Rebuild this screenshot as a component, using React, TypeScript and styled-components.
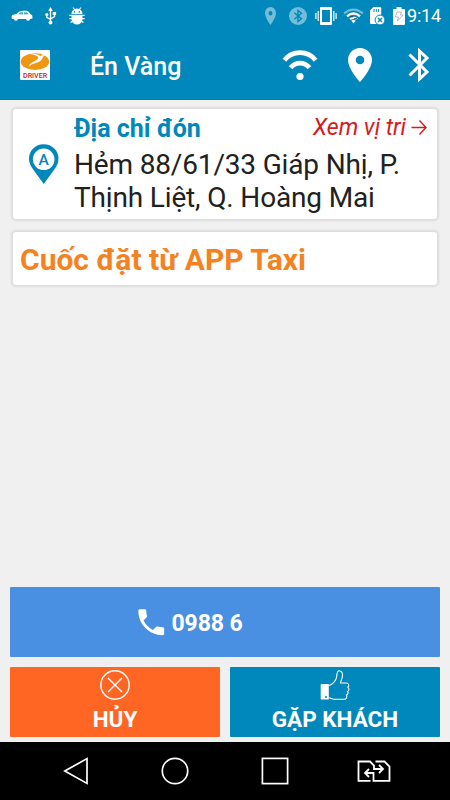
import React from "react";
import styled, { createGlobalStyle } from "styled-components";

const BLUE = "#0087bb";

const GlobalStyle = createGlobalStyle`
  * { box-sizing: border-box; }
  body { margin: 0; background: #f0f0f0; font-family: Roboto, sans-serif; }
  svg { display: block; flex: none; }
`;

const Screen = styled.div`
  width: 450px;
  height: 800px;
  display: flex;
  flex-direction: column;
  background: #f0f0f0;
  overflow: hidden;
`;

const StatusBar = styled.div`
  height: 32px;
  flex: none;
  display: flex;
  align-items: center;
  background: ${BLUE};
  color: #fff;
  padding: 0 0 1px 11px;
`;

const StatusIcon = styled.div<{ $gap: number; $dim?: boolean }>`
  margin-left: ${(p) => p.$gap}px;
  opacity: ${(p) => (p.$dim ? 0.45 : 1)};
`;

const Clock = styled.span`
  margin-left: 2px;
  font-size: 18px;
  line-height: 30px;
  letter-spacing: -0.2px;
  white-space: nowrap;
`;

const AppBar = styled.header`
  height: 68px;
  flex: none;
  display: flex;
  align-items: center;
  padding: 0 20px 2px;
  background: ${BLUE};
  border-bottom: 1px solid #0080b2;
  color: #fff;
`;

const Title = styled.h1`
  margin: 4px 0 0 40px;
  flex: 1;
  font-size: 25px;
  line-height: 30px;
  font-weight: 500;
`;

const AppActions = styled.div`
  display: flex;
  align-items: center;
`;

const Content = styled.main`
  flex: 1;
  display: flex;
  flex-direction: column;
  gap: 13px;
  padding: 9px 13px 0;
`;

const Card = styled.section<{ $height: number }>`
  height: ${(p) => p.$height}px;
  flex: none;
  display: flex;
  background: #fff;
  border-radius: 3px;
  box-shadow: 0 0 2px 2px #dcdcdc;
`;

const PinColumn = styled.div`
  width: 61px;
  padding: 35px 0 0 15px;
`;

const AddressColumn = styled.div`
  flex: 1;
  min-width: 0;
`;

const AddressHeader = styled.div`
  display: flex;
  justify-content: space-between;
  padding-right: 10px;
  height: 39px;
`;

const Heading = styled.h2`
  margin: 5px 0 0;
  color: ${BLUE};
  font-size: 25px;
  line-height: 30px;
  font-weight: 700;
  white-space: nowrap;
`;

const MapLink = styled.a`
  display: flex;
  align-items: center;
  gap: 5px;
  height: 30px;
  margin-top: 3px;
  color: #d71920;
  font-size: 23px;
  font-style: italic;
  white-space: nowrap;
`;

const Address = styled.p`
  margin: 0;
  color: #212121;
  font-size: 28px;
  line-height: 33px;
  letter-spacing: -0.16px;
  white-space: nowrap;
`;

const Notice = styled.p`
  margin: 10px 0 0 7px;
  color: #f58220;
  font-size: 30px;
  line-height: 36px;
  font-weight: 700;
  white-space: nowrap;
`;

const Actions = styled.footer`
  display: grid;
  grid-template-columns: 1fr 1fr;
  grid-auto-rows: 70px;
  gap: 10px;
  padding: 0 10px 5px;
`;

const CallButton = styled.button`
  grid-column: 1 / -1;
  display: flex;
  align-items: center;
  padding: 0 0 0 124px;
  border: 0;
  border-radius: 1px;
  background: #4990e2;
  color: #fff;
  font: 700 23px/28px Roboto, sans-serif;
`;

const CallNumber = styled.span`
  margin: 4px 0 0 3px;
  letter-spacing: -0.1px;
`;

const ActionButton = styled.button<{ $color: string }>`
  display: flex;
  flex-direction: column;
  align-items: center;
  padding: 3px 0 0;
  border: 0;
  border-radius: 1px;
  background: ${(p) => p.$color};
  color: #fff;
`;

const ActionLabel = styled.span`
  margin-top: 4px;
  font: 700 22.5px/30px Roboto, sans-serif;
`;

const NavBar = styled.nav`
  height: 58px;
  flex: none;
  display: grid;
  grid-template-columns: repeat(4, 99.4px);
  justify-content: center;
  align-items: center;
  justify-items: center;
  background: #000;
`;

const CarIcon = () => (
  <svg width="22" height="12" viewBox="0 0 22 12" fill="#fff">
    <path d="M1 5 5.5 4C8 1.5 9 .8 12 .8h3c2 0 3 .8 4.2 3.2l2 1.2.4 3-2 .8H1.2L.5 7.5z" />
    <path d="M7 4.2 9.3 2.2H12v2.2zM13 2.2h2.2c1 0 1.7.6 2.3 2L13 4.4z" fill={BLUE} opacity=".7" />
    <circle cx="5" cy="8.7" r="2" /><circle cx="17" cy="8.7" r="2" />
  </svg>
);

const UsbIcon = () => (
  <svg width="12" height="18" viewBox="0 0 12 18" fill="#fff">
    <path d="M5.5 15V3M1.8 7.5v2.8l3.7 2.2M9.5 7v2.5l-4 2.5" fill="none" stroke="#fff" strokeWidth="1.4" />
    <path d="m5.5 0 2.3 4H3.2zM7.7 5h3.4v3H7.7z" /><circle cx="1.8" cy="7.5" r="1.6" /><circle cx="5.5" cy="15.5" r="1.9" />
  </svg>
);

const BugIcon = () => (
  <svg width="16" height="18" viewBox="0 0 16 18" fill="#fff">
    <path d="M2.5 7C2.5 4.8 3.6 3.3 5 2.6L3.5.8l.8-.6L6 2a5.5 5.5 0 0 1 4 0L11.7.2l.8.6L11 2.6c1.4.7 2.5 2.2 2.5 4.4zM2.5 8h11v4a5.5 5.5 0 0 1-11 0z" />
    <path d="M.3 8.3h15.4M.3 11.7h15.4M1.5 15.4l3-1.5M14.5 15.4l-3-1.5" stroke="#fff" strokeWidth="1.2" />
    <circle cx="5.6" cy="4.9" r=".8" fill={BLUE} /><circle cx="10.4" cy="4.9" r=".8" fill={BLUE} />
  </svg>
);

const PlaceIcon = ({ width, height }: { width: number; height: number }) => (
  <svg width={width} height={height} viewBox="5 2 14 20" preserveAspectRatio="none" fill="#fff">
    <path d="M12 2C8.13 2 5 5.13 5 9c0 5.25 7 13 7 13s7-7.75 7-13c0-3.87-3.13-7-7-7zm0 9.5a2.5 2.5 0 1 1 0-5 2.5 2.5 0 0 1 0 5z" />
  </svg>
);

const BtRoundIcon = () => (
  <svg width="18" height="18" viewBox="0 0 18 18">
    <circle cx="9" cy="9" r="9" fill="#fff" />
    <path d="m5.4 5.8 7 6L9 14.5v-11l3.4 2.7-7 6" fill="none" stroke={BLUE} strokeWidth="1.4" />
  </svg>
);

const VibrateIcon = () => (
  <svg width="22" height="18" viewBox="0 0 22 18">
    <path fillRule="evenodd" d="M6 0h10a1 1 0 0 1 1 1v16a1 1 0 0 1-1 1H6a1 1 0 0 1-1-1V1a1 1 0 0 1 1-1zm1 3v12h8V3z" fill="#fff" />
    <path d="M3.2 4v10M.9 6v6M18.8 4v10M21.1 6v6" stroke="#fff" strokeWidth="1.2" />
  </svg>
);

const StatusWifiIcon = () => (
  <svg width="21" height="16" viewBox="0 0 21 16" fill="none">
    <path d="M1 5.5Q10.5-2.5 20 5.5" stroke="#73bcda" strokeWidth="2" />
    <path d="M4 8.3q6.5-5.5 13 0M7 11.2q3.5-3 7 0" stroke="#fff" strokeWidth="2.3" />
    <path d="m8.3 12.8 2.2 2.7 2.2-2.7q-2.2-1.6-4.4 0z" fill="#fff" />
    <path d="M7 8.8h3.5M11 10.8h3" stroke="#14364d" strokeWidth="1" />
  </svg>
);

const SdIcon = () => (
  <svg width="15" height="18" viewBox="0 0 15 18">
    <path d="M3.5 0H10a1.2 1.2 0 0 1 1.2 1.2V17H1.2A1.2 1.2 0 0 1 0 15.8V3.5z" fill="#fff" />
    <path d="M4 2v3M6.3 2v3M8.6 2v3" stroke={BLUE} />
    <circle cx="10" cy="13" r="4.9" fill="#fff" stroke={BLUE} />
    <path d="m8 11 4 4m0-4-4 4" stroke={BLUE} strokeWidth="1.4" />
  </svg>
);

const BatteryIcon = () => (
  <svg width="12" height="18" viewBox="0 0 12 18">
    <path d="M3.5 0h5v2H11a1 1 0 0 1 1 1v14a1 1 0 0 1-1 1H1a1 1 0 0 1-1-1V3a1 1 0 0 1 1-1h2.5z" fill="#fff" />
    <path d="M4.2 5h4.3L7.3 8H10l-5.5 6 1-4H2.4z" fill="none" stroke="#a9b3b8" strokeWidth=".9" />
  </svg>
);

const Logo = () => (
  <svg width="30" height="30" viewBox="0 0 30 30">
    <rect width="30" height="30" rx="1" fill="#fff" />
    <ellipse cx="15" cy="11.6" rx="14.3" ry="8.4" fill="#ef9711" />
    <path d="M5 3.7C11 2.8 17 3.5 20.2 6c2.5-.8 4.5-1.6 5.3-.9-2.3.4-2.5 3.4-4.6 5.5-3 3-9 2.5-12.3 6.2 1.4-4.6 6.3-4.9 9.1-7.7 1-1 .8-2.2-1.2-3.3C13.3 4.1 9 3.7 5 3.7z" fill="#fff" />
    <text x="3" y="27.7" textLength="24.2" lengthAdjust="spacingAndGlyphs" fontFamily="Roboto, sans-serif" fontSize="7.2" fontWeight="500" fill="#c5232a">DRIVER</text>
  </svg>
);

const WifiIcon = () => (
  <svg width="36" height="34" viewBox="0 0 36 34" fill="none" stroke="#fff">
    <path d="M2.4 12.2C10.5 2.2 25.5 2.2 33.6 12.2" strokeWidth="4.8" />
    <path d="M8.6 19.8c4.8-6.2 14-6.2 18.8 0" strokeWidth="4.8" />
    <circle cx="18" cy="28.5" r="3.6" fill="#fff" stroke="none" />
  </svg>
);

const BluetoothIcon = () => (
  <svg width="22" height="34" viewBox="0 0 22 34" fill="none" stroke="#fff" strokeWidth="3">
    <path d="M1.5 6.5 19 24l-7.5 7V3L19 10 1.5 27.5" />
  </svg>
);

const PickupPin = () => (
  <svg width="32" height="41" viewBox="0 0 32 41">
    <path d="M15.6.2C7.2.2 1 6.5 1 14.5c0 5 2.2 8.2 4.2 11.1L15.7 40l10.6-14.4c2-2.9 4.2-6.1 4.2-11.1C30.5 6.5 24.2.2 15.6.2z" fill={BLUE} />
    <circle cx="15.7" cy="15.3" r="10.8" fill="#fff" />
    <text x="15.7" y="21" textAnchor="middle" fontFamily="Roboto, sans-serif" fontSize="15.5" fontWeight="500" fill={BLUE}>A</text>
  </svg>
);

const ArrowIcon = () => (
  <svg width="16" height="16" viewBox="0 0 16 16" fill="none" stroke="#d71920" strokeWidth="1.4">
    <path d="M.5 8.5H15M8.5 1.5l6.5 7-6.5 7" />
  </svg>
);

const PhoneIcon = () => (
  <svg width="34.5" height="34.5" viewBox="0 0 24 24" fill="#fff">
    <path d="M6.62 10.79c1.44 2.83 3.76 5.14 6.59 6.59l2.2-2.2c.27-.27.67-.36 1.02-.24 1.12.37 2.33.57 3.57.57.55 0 1 .45 1 1V20c0 .55-.45 1-1 1-9.39 0-17-7.61-17-17 0-.55.45-1 1-1h3.5c.55 0 1 .45 1 1 0 1.25.2 2.45.57 3.57.11.35.03.74-.25 1.02l-2.2 2.2z" />
  </svg>
);

const CancelIcon = () => (
  <svg width="30" height="30" viewBox="0 0 30 30" fill="none" stroke="#fff" strokeWidth="1.4">
    <circle cx="15" cy="15" r="14.2" />
    <path d="m8 8 14 14M22 8 8 22" />
  </svg>
);

const ThumbIcon = () => (
  <svg width="30" height="30" viewBox="0 0 30 30">
    <path fillRule="evenodd" d="M1.4 14h7.4v15.5H1.4a.7.7 0 0 1-.7-.7V14.7a.7.7 0 0 1 .7-.7zM6 26a1 1 0 1 0 0 2 1 1 0 0 0 0-2z" fill="#fff" />
    <path d="M9 15.5c3.5-1 6.2-4.5 7.2-7C17 6.3 16.6.8 19 .7c3.4-.1 4 3.8 3.3 6.5-.6 2.2-1.6 3.8-1.8 5.8h5.7c2.8 0 3.3 3 1.6 4.1 1.8 1.2 1.4 3.6-.3 4.3 1 1.2.6 3.1-1 3.7.8 1.4.1 4.1-2.4 4.1H14c-2.2 0-3-1.2-5-1.4" fill="none" stroke="#fff" strokeWidth="1.1" />
  </svg>
);

const BackIcon = () => (
  <svg width="26" height="28" viewBox="0 0 26 28" fill="none" stroke="#fff" strokeWidth="1.7">
    <path d="M24 1.6v24.8L1.8 14z" />
  </svg>
);

const HomeIcon = () => (
  <svg width="28" height="28" viewBox="0 0 28 28" fill="none" stroke="#fff" strokeWidth="1.7">
    <circle cx="14" cy="14" r="12.7" />
  </svg>
);

const RecentIcon = () => (
  <svg width="28" height="28" viewBox="0 0 28 28" fill="none" stroke="#fff" strokeWidth="1.7">
    <rect x="1.4" y="1.4" width="25.2" height="25.2" />
  </svg>
);

const SimSwapIcon = () => (
  <svg width="34" height="22" viewBox="0 0 34 22" fill="none" stroke="#fff" strokeWidth="1.8">
    <path d="M13.5 20.8H1.5V1.5H13L17 5.5V9H25M18.5 1.5H27.5L32.5 6.5V20.8H16.5V13H9" />
    <path d="m22 5 4 4-4 4M12 9l-4 4 4 4" />
  </svg>
);

export default function App() {
  return (
    <Screen>
      <GlobalStyle />
      <StatusBar>
        <StatusIcon $gap={0}><CarIcon /></StatusIcon>
        <StatusIcon $gap={12}><UsbIcon /></StatusIcon>
        <StatusIcon $gap={12}><BugIcon /></StatusIcon>
        <StatusIcon $gap={180} $dim><PlaceIcon width={11} height={18} /></StatusIcon>
        <StatusIcon $gap={13} $dim><BtRoundIcon /></StatusIcon>
        <StatusIcon $gap={8}><VibrateIcon /></StatusIcon>
        <StatusIcon $gap={6}><StatusWifiIcon /></StatusIcon>
        <StatusIcon $gap={6}><SdIcon /></StatusIcon>
        <StatusIcon $gap={8}><BatteryIcon /></StatusIcon>
        <Clock>9:14</Clock>
      </StatusBar>
      <AppBar>
        <Logo />
        <Title>Én Vàng</Title>
        <AppActions>
          <StatusIcon $gap={0}><WifiIcon /></StatusIcon>
          <StatusIcon $gap={30}><PlaceIcon width={24} height={34} /></StatusIcon>
          <StatusIcon $gap={36}><BluetoothIcon /></StatusIcon>
        </AppActions>
      </AppBar>
      <Content>
        <Card $height={110}>
          <PinColumn><PickupPin /></PinColumn>
          <AddressColumn>
            <AddressHeader>
              <Heading>Địa chỉ đón</Heading>
              <MapLink>Xem vị tri<ArrowIcon /></MapLink>
            </AddressHeader>
            <Address>Hẻm 88/61/33 Giáp Nhị, P.<br />Thịnh Liệt, Q. Hoàng Mai</Address>
          </AddressColumn>
        </Card>
        <Card $height={53}>
          <Notice>Cuốc đặt từ APP Taxi</Notice>
        </Card>
      </Content>
      <Actions>
        <CallButton><PhoneIcon /><CallNumber>0988 6</CallNumber></CallButton>
        <ActionButton $color="#ff6624"><CancelIcon /><ActionLabel>HỦY</ActionLabel></ActionButton>
        <ActionButton $color={BLUE}><ThumbIcon /><ActionLabel>GẶP KHÁCH</ActionLabel></ActionButton>
      </Actions>
      <NavBar>
        <BackIcon />
        <HomeIcon />
        <RecentIcon />
        <SimSwapIcon />
      </NavBar>
    </Screen>
  );
}
